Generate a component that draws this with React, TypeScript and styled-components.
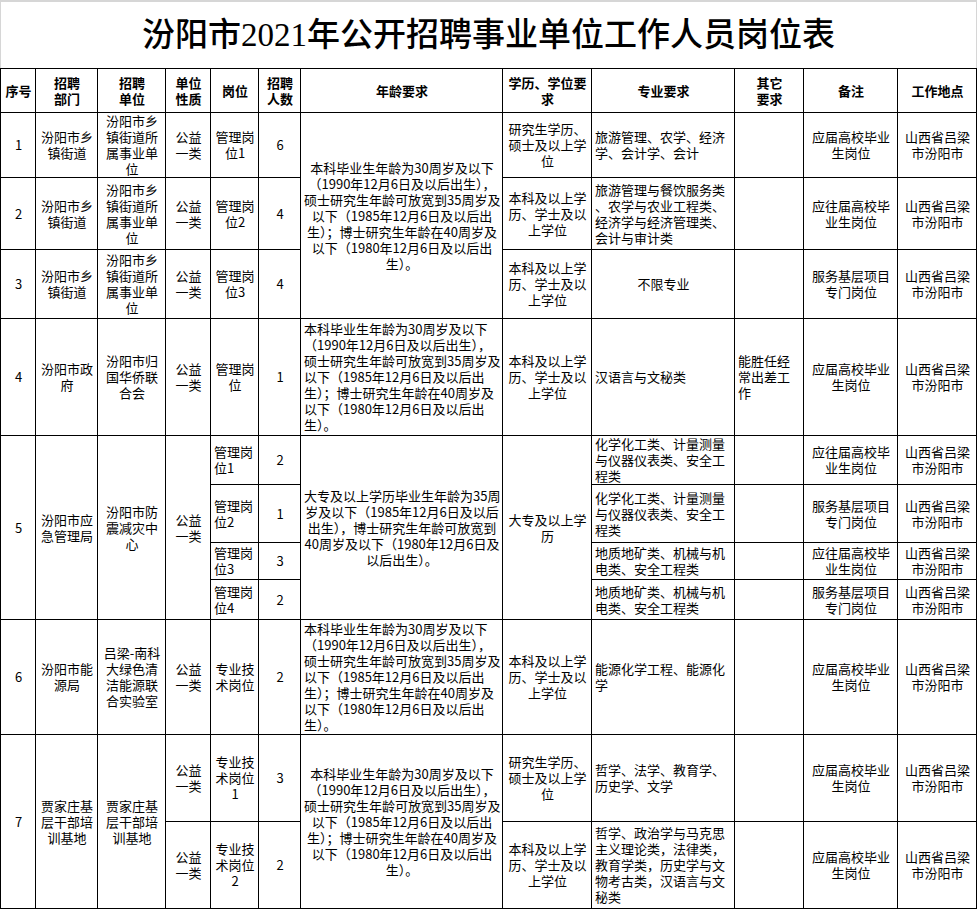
import React from "react"
import styled, {createGlobalStyle, css} from "styled-components"

const GlobalStyle = createGlobalStyle`
    html, body {
        margin: 0;
        padding: 0;
        background: #fff;
    }
    body {
        font-family: "Noto Sans CJK SC", sans-serif;
        color: #000;
    }
`

const Page = styled.div`
    width: 977px;
`

const TitleBar = styled.div`
    box-sizing: border-box;
    height: 68px;
    border-top: 2px solid #d6d6d6;
    border-left: 1px solid #d6d6d6;
    border-right: 1px solid #d6d6d6;
    display: flex;
    align-items: center;
    justify-content: center;
`

const Title = styled.h1`
    margin: 0;
    font-family: "Liberation Serif", "Noto Sans CJK SC", serif;
    font-size: 33px;
    font-weight: 500;
    line-height: 40px;
`

const Table = styled.table`
    width: 976px;
    border-collapse: collapse;
    table-layout: fixed;
`

const Row = styled.tr<{$h: number}>`
    height: ${p => p.$h}px;
`

const cellBase = css<{$align?: "left" | "center"}>`
    border: 1px solid #000;
    padding: 0 2px 0 3px;
    font-size: 13px;
    line-height: 16px;
    text-align: ${p => p.$align ?? "center"};
    vertical-align: middle;
    white-space: pre;
    overflow: visible;
`

const Td = styled.td<{$align?: "left" | "center"}>`
    ${cellBase};
    font-weight: 400;
`

const Th = styled.th<{$align?: "left" | "center"}>`
    ${cellBase};
    font-weight: 700;
`

const colWidths = [35, 62, 68, 45, 48, 42, 202, 89, 143, 69, 94, 79]

const AGE_A = [
    "本科毕业生年龄为30周岁及以下",
    "（1990年12月6日及以后出生），",
    "硕士研究生年龄可放宽到35周岁及",
    "以下（1985年12月6日及以后出",
    "生）；博士研究生年龄在40周岁及",
    "以下（1980年12月6日及以后出",
    "生）。",
].join("\n")

const AGE_B = [
    "大专及以上学历毕业生年龄为35周",
    "岁及以下（1985年12月6日及以后",
    "出生），博士研究生年龄可放宽到",
    "40周岁及以下（1980年12月6日及",
    "以后出生）。",
].join("\n")

const TOWN = "汾阳市乡\n镇街道"
const TOWN_UNIT = "汾阳市乡\n镇街道所\n属事业单\n位"
const GONGYI = "公益\n一类"
const PLACE = "山西省吕梁\n市汾阳市"
const EDU_BK = "本科及以上学\n历、学士及以\n上学位"
const EDU_YJS = "研究生学历、\n硕士及以上学\n位"
const YJ = "应届高校毕业\n生岗位"
const YWJ = "应往届高校毕\n业生岗位"
const JC = "服务基层项目\n专门岗位"
const CHEM = "化学化工类、计量测量\n与仪器仪表类、安全工\n程类"
const GEO = "地质地矿类、机械与机\n电类、安全工程类"

export default function App() {
    return (
        <Page>
            <GlobalStyle />
            <TitleBar>
                <Title>汾阳市2021年公开招聘事业单位工作人员岗位表</Title>
            </TitleBar>
            <Table>
                <colgroup>
                    {colWidths.map((w, i) => (
                        <col key={i} style={{width: w}} />
                    ))}
                </colgroup>
                <thead>
                    <Row $h={44}>
                        <Th>序号</Th>
                        <Th>{"招聘\n部门"}</Th>
                        <Th>{"招聘\n单位"}</Th>
                        <Th>{"单位\n性质"}</Th>
                        <Th>岗位</Th>
                        <Th>{"招聘\n人数"}</Th>
                        <Th>年龄要求</Th>
                        <Th>{"学历、学位要\n求"}</Th>
                        <Th>专业要求</Th>
                        <Th>{"其它\n要求"}</Th>
                        <Th>备注</Th>
                        <Th>工作地点</Th>
                    </Row>
                </thead>
                <tbody>
                    <Row $h={65}>
                        <Td>1</Td>
                        <Td>{TOWN}</Td>
                        <Td>{TOWN_UNIT}</Td>
                        <Td>{GONGYI}</Td>
                        <Td>{"管理岗\n位1"}</Td>
                        <Td>6</Td>
                        <Td rowSpan={3}>{AGE_A}</Td>
                        <Td>{EDU_YJS}</Td>
                        <Td $align="left">{"旅游管理、农学、经济\n学、会计学、会计"}</Td>
                        <Td />
                        <Td>{YJ}</Td>
                        <Td>{PLACE}</Td>
                    </Row>
                    <Row $h={72}>
                        <Td>2</Td>
                        <Td>{TOWN}</Td>
                        <Td>{TOWN_UNIT}</Td>
                        <Td>{GONGYI}</Td>
                        <Td>{"管理岗\n位2"}</Td>
                        <Td>4</Td>
                        <Td>{EDU_BK}</Td>
                        <Td $align="left">
                            {"旅游管理与餐饮服务类\n、农学与农业工程类、\n经济学与经济管理类、\n会计与审计类"}
                        </Td>
                        <Td />
                        <Td>{YWJ}</Td>
                        <Td>{PLACE}</Td>
                    </Row>
                    <Row $h={69}>
                        <Td>3</Td>
                        <Td>{TOWN}</Td>
                        <Td>{TOWN_UNIT}</Td>
                        <Td>{GONGYI}</Td>
                        <Td>{"管理岗\n位3"}</Td>
                        <Td>4</Td>
                        <Td>{EDU_BK}</Td>
                        <Td>不限专业</Td>
                        <Td />
                        <Td>{JC}</Td>
                        <Td>{PLACE}</Td>
                    </Row>
                    <Row $h={117}>
                        <Td>4</Td>
                        <Td>{"汾阳市政\n府"}</Td>
                        <Td>{"汾阳市归\n国华侨联\n合会"}</Td>
                        <Td>{GONGYI}</Td>
                        <Td>{"管理岗\n位"}</Td>
                        <Td>1</Td>
                        <Td $align="left">{AGE_A}</Td>
                        <Td>{EDU_BK}</Td>
                        <Td $align="left">汉语言与文秘类</Td>
                        <Td $align="left">{"能胜任经\n常出差工\n作"}</Td>
                        <Td>{YJ}</Td>
                        <Td>{PLACE}</Td>
                    </Row>
                    <Row $h={49}>
                        <Td rowSpan={4}>5</Td>
                        <Td rowSpan={4}>{"汾阳市应\n急管理局"}</Td>
                        <Td rowSpan={4}>{"汾阳市防\n震减灾中\n心"}</Td>
                        <Td rowSpan={4}>{GONGYI}</Td>
                        <Td $align="left">{"管理岗\n位1"}</Td>
                        <Td>2</Td>
                        <Td rowSpan={4}>{AGE_B}</Td>
                        <Td rowSpan={4}>{"大专及以上学\n历"}</Td>
                        <Td $align="left">{CHEM}</Td>
                        <Td />
                        <Td>{YWJ}</Td>
                        <Td>{PLACE}</Td>
                    </Row>
                    <Row $h={58}>
                        <Td $align="left">{"管理岗\n位2"}</Td>
                        <Td>1</Td>
                        <Td $align="left">{CHEM}</Td>
                        <Td />
                        <Td>{JC}</Td>
                        <Td>{PLACE}</Td>
                    </Row>
                    <Row $h={37}>
                        <Td $align="left">{"管理岗\n位3"}</Td>
                        <Td>3</Td>
                        <Td $align="left">{GEO}</Td>
                        <Td />
                        <Td>{YWJ}</Td>
                        <Td>{PLACE}</Td>
                    </Row>
                    <Row $h={40}>
                        <Td $align="left">{"管理岗\n位4"}</Td>
                        <Td>2</Td>
                        <Td $align="left">{GEO}</Td>
                        <Td />
                        <Td>{JC}</Td>
                        <Td>{PLACE}</Td>
                    </Row>
                    <Row $h={115}>
                        <Td>6</Td>
                        <Td>{"汾阳市能\n源局"}</Td>
                        <Td>{"吕梁-南科\n大绿色清\n洁能源联\n合实验室"}</Td>
                        <Td>{GONGYI}</Td>
                        <Td>{"专业技\n术岗位"}</Td>
                        <Td>2</Td>
                        <Td $align="left">{AGE_A}</Td>
                        <Td>{EDU_BK}</Td>
                        <Td $align="left">{"能源化学工程、能源化\n学"}</Td>
                        <Td />
                        <Td>{YJ}</Td>
                        <Td>{PLACE}</Td>
                    </Row>
                    <Row $h={87}>
                        <Td rowSpan={2}>7</Td>
                        <Td rowSpan={2}>{"贾家庄基\n层干部培\n训基地"}</Td>
                        <Td rowSpan={2}>{"贾家庄基\n层干部培\n训基地"}</Td>
                        <Td>{GONGYI}</Td>
                        <Td>{"专业技\n术岗位\n1"}</Td>
                        <Td>3</Td>
                        <Td rowSpan={2}>{AGE_A}</Td>
                        <Td>{EDU_YJS}</Td>
                        <Td $align="left">{"哲学、法学、教育学、\n历史学、文学"}</Td>
                        <Td />
                        <Td>{YJ}</Td>
                        <Td>{PLACE}</Td>
                    </Row>
                    <Row $h={87}>
                        <Td>{GONGYI}</Td>
                        <Td>{"专业技\n术岗位\n2"}</Td>
                        <Td>2</Td>
                        <Td>{EDU_BK}</Td>
                        <Td $align="left">
                            {"哲学、政治学与马克思\n主义理论类，法律类，\n教育学类，历史学与文\n物考古类，汉语言与文\n秘类"}
                        </Td>
                        <Td />
                        <Td>{YJ}</Td>
                        <Td>{PLACE}</Td>
                    </Row>
                </tbody>
            </Table>
        </Page>
    )
}
